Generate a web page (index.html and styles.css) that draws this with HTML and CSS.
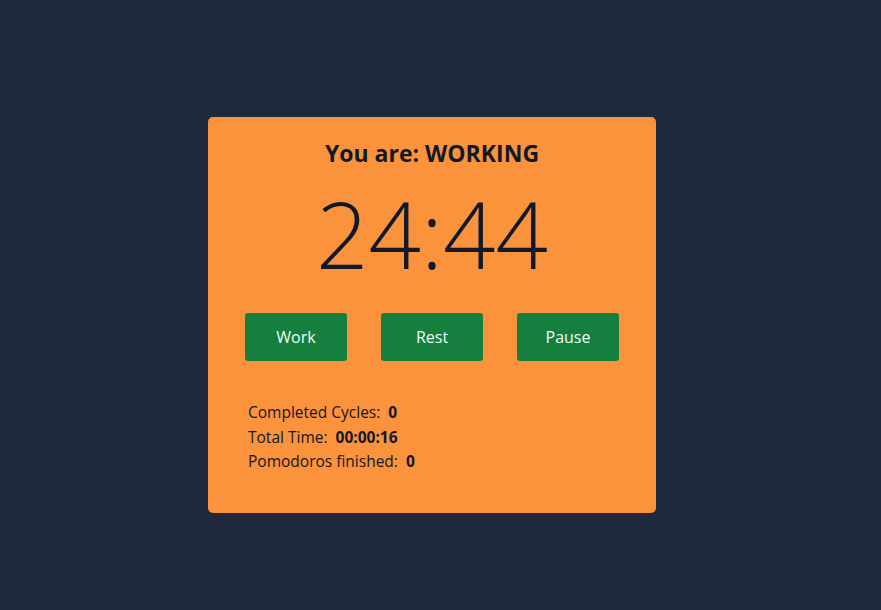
FILE: index.html
```html
<!DOCTYPE html>
<html>
<head>
<meta charset="utf-8">
<link rel="stylesheet" href="styles.css">
</head>
<body>
<main class="page">
  <section class="card">
    <h1 class="status">You are: WORKING</h1>
    <div class="timer">24:44</div>
    <div class="buttons">
      <button class="btn">Work</button>
      <button class="btn">Rest</button>
      <button class="btn">Pause</button>
    </div>
    <ul class="stats">
      <li>Completed Cycles:&nbsp; <b>0</b></li>
      <li>Total Time:&nbsp; <b>00:00:16</b></li>
      <li>Pomodoros finished:&nbsp; <b>0</b></li>
    </ul>
  </section>
</main>
</body>
</html>
```

FILE: styles.css
```css
html, body {
  margin: 0;
  padding: 0;
  height: 100%;
  background: #1e293b;
  font-family: "Open Sans", "Noto Sans", sans-serif;
  color: #111827;
}
.page {
  height: 100%;
  box-sizing: border-box;
  padding: 20px 17px 0 0;
  display: flex;
  align-items: center;
  justify-content: center;
}
.card {
  width: 448px;
  height: 396px;
  box-sizing: border-box;
  background: #fb923c;
  border-radius: 5px;
  padding: 24px 0 0;
  display: flex;
  flex-direction: column;
  align-items: center;
}
.status {
  margin: 0;
  font-size: 23px;
  font-weight: 700;
  line-height: 24px;
}
.timer {
  margin-top: 14px;
  font-size: 92px;
  font-weight: 300;
  line-height: 110px;
}
.buttons {
  margin-top: 24px;
  display: flex;
  gap: 34px;
}
.btn {
  width: 102px;
  height: 48px;
  border: none;
  border-radius: 3px;
  background: #15803d;
  color: #f0fdf4;
  font-family: inherit;
  font-size: 16px;
}
.stats {
  list-style: none;
  align-self: stretch;
  margin: 39px 0 0;
  padding: 0 0 0 40px;
  font-size: 15.5px;
  line-height: 24.5px;
}
.stats b { font-weight: 700; }
```
